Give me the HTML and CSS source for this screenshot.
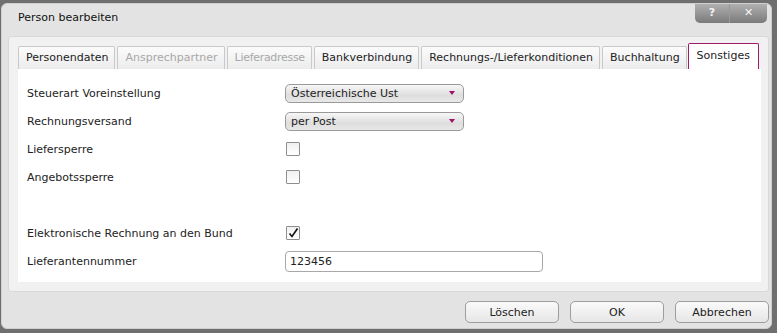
FILE: index.html
```html
<!DOCTYPE html>
<html lang="de">
<head>
    <meta charset="UTF-8">
    <title>Person bearbeiten</title>
    <link rel="stylesheet" href="styles.css">
</head>
<body>

    <div class="dialog">
        <div class="titlebar">
            <span class="title">Person bearbeiten</span>
            <div class="winbtns">
                <span class="winbtn">?</span>
                <span class="winbtn">&#x2715;</span>
            </div>
        </div>

        <div class="panel">
            <div class="tabs">
                <span class="tab">Personendaten</span>
                <span class="tab disabled">Ansprechpartner</span>
                <span class="tab disabled narrow">Lieferadresse</span>
                <span class="tab">Bankverbindung</span>
                <span class="tab">Rechnungs-/Lieferkonditionen</span>
                <span class="tab">Buchhaltung</span>
                <span class="tab active">Sonstiges</span>
            </div>
            <div class="content">
                <div class="row">
                    <label>Steuerart Voreinstellung</label>
                    <div class="select"><span>Österreichische Ust</span><i class="arrow"></i></div>
                </div>
                <div class="row">
                    <label>Rechnungsversand</label>
                    <div class="select"><span>per Post</span><i class="arrow"></i></div>
                </div>
                <div class="row">
                    <label>Liefersperre</label>
                    <span class="check"></span>
                </div>
                <div class="row">
                    <label>Angebotssperre</label>
                    <span class="check"></span>
                </div>
                <div class="row"></div>
                <div class="row">
                    <label>Elektronische Rechnung an den Bund</label>
                    <span class="check">
                        <svg width="12" height="12" viewBox="0 0 12 12"><path d="M2.5 6.5 L5 9.5 L10.5 1.5" fill="none" stroke="#111" stroke-width="1.6"/></svg>
                    </span>
                </div>
                <div class="row">
                    <label>Lieferantennummer</label>
                    <div class="textbox">123456</div>
                </div>
            </div>
        </div>

        <div class="footer">
            <button>Löschen</button>
            <button>OK</button>
            <button>Abbrechen</button>
        </div>
    </div>

</body>
</html>
```

FILE: styles.css
```css
body {
    margin: 0;
    background: #6f6f6f;
    font-family: "DejaVu Sans", Verdana, sans-serif;
    font-size: 11px;
    color: #222;
}
.dialog {
    width: 771px;
    height: 326px;
    margin: 3px 0 0 1px;
    background: #e3e3e3;
    border-radius: 6px;
    box-sizing: border-box;
    border: 1px solid #cfcfcf;
}
.titlebar {
    height: 31px;
    display: flex;
    justify-content: space-between;
    align-items: flex-start;
    padding-left: 16px;
}
.title {
    margin-top: 7px;
    font-size: 11px;
    color: #111;
}
.winbtns {
    display: flex;
    margin-right: 4px;
}
.winbtn {
    width: 34px;
    height: 19px;
    line-height: 18px;
    text-align: center;
    color: #f4f4f4;
    font-weight: bold;
    background: linear-gradient(#b0b0b0, #7a7a7a);
    border-left: 1px solid #999;
}
.winbtn:first-child {
    border-radius: 0 0 0 5px;
    border-left: none;
}
.winbtn:last-child {
    width: 37px;
    border-radius: 0 0 5px 0;
}
.panel {
    margin: 1px 2px 0 6px;
    background: #f1f1f1;
    border: 1px solid #d8d8d8;
    border-radius: 3px;
    padding: 6px 8px 9px 9px;
}
.tabs {
    display: flex;
    align-items: flex-end;
    gap: 2px;
    height: 26px;
}
.tab {
    height: 22px;
    line-height: 22px;
    padding: 0 6px 0 7px;
    background: linear-gradient(#fbfbfb, #ececec);
    border: 1px solid #c9c9c9;
    border-bottom: none;
    border-radius: 2px 2px 0 0;
    color: #222;
}
.tab.disabled {
    color: #a8a8a8;
}
.tab.narrow {
    letter-spacing: -0.3px;
}
.tab.active {
    height: 25px;
    line-height: 23px;
    margin-left: -1px;
    background: #fff;
    border-color: #a01a6a;
    padding: 0 8px;
}
.content {
    background: #fff;
    height: 203px;
    width: 743px;
    padding-top: 10px;
}
.row {
    height: 28px;
    display: flex;
    align-items: center;
}
.row label {
    width: 258px;
    padding-left: 9px;
}
.select {
    box-sizing: border-box;
    width: 179px;
    height: 19px;
    border: 1px solid #9a9a9a;
    border-radius: 5px;
    background: linear-gradient(#f7f7f7, #dedede 60%, #e8e8e8);
    display: flex;
    align-items: center;
    justify-content: space-between;
    padding: 0 8px 0 5px;
}
.arrow {
    width: 0;
    height: 0;
    border-left: 3px solid transparent;
    border-right: 3px solid transparent;
    border-top: 4px solid #a0106a;
}
.check {
    width: 12px;
    height: 12px;
    margin-left: 1px;
    border: 1px solid #8e8e8e;
    border-radius: 1px;
    background: linear-gradient(#f0f0f0, #fff);
    display: flex;
}
.textbox {
    width: 258px;
    height: 21px;
    box-sizing: border-box;
    border: 1px solid #a8a8a8;
    border-radius: 4px;
    padding: 3px 4px;
    background: #fff;
}
.footer {
    display: flex;
    justify-content: flex-end;
    gap: 11px;
    padding: 9px 2px 0 0;
}
button {
    width: 94px;
    height: 22px;
    font-family: "DejaVu Sans", Verdana, sans-serif;
    font-size: 11px;
    color: #222;
    border: 1px solid #9d9d9d;
    border-radius: 5px;
    background: linear-gradient(#fafafa, #e6e6e6);
}
```
